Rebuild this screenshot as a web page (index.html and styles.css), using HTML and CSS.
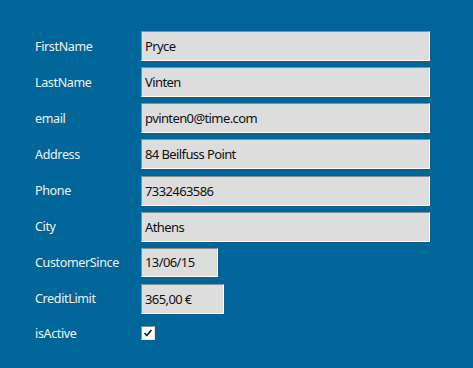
FILE: index.html
```html
<!DOCTYPE html>
<html>
<head>
<meta charset="utf-8">
<link rel="stylesheet" href="styles.css">
</head>
<body>
<div class="form">
  <div class="label">FirstName</div><div class="field wide">Pryce</div>
  <div class="label">LastName</div><div class="field wide">Vinten</div>
  <div class="label">email</div><div class="field wide">pvinten0@time.com</div>
  <div class="label">Address</div><div class="field wide">84 Beilfuss Point</div>
  <div class="label">Phone</div><div class="field wide">7332463586</div>
  <div class="label">City</div><div class="field wide">Athens</div>
  <div class="label">CustomerSince</div><div class="field date">13/06/15</div>
  <div class="label">CreditLimit</div><div class="field money">365,00 €</div>
  <div class="label">isActive</div>
  <div class="check"><svg width="10" height="10" viewBox="0 0 10 10"><path d="M1.5 5 L3.8 7.5 L8.5 2" fill="none" stroke="#222" stroke-width="1.8"/></svg></div>
</div>
</body>
</html>
```
FILE: styles.css
```css
html, body {
  margin: 0;
  padding: 0;
  background: #006699;
  width: 473px;
  height: 368px;
  overflow: hidden;
}
.form {
  display: grid;
  grid-template-columns: 106px auto;
  grid-template-rows: repeat(8, 30px) 26px;
  row-gap: 6.15px;
  align-items: center;
  justify-items: start;
  padding: 31px 0 0 35px;
  font-family: "Noto Sans", "Open Sans", sans-serif;
}
.label {
  color: #f2f2f2;
  font-size: 12.5px;
  letter-spacing: -0.35px;
}
.field {
  box-sizing: border-box;
  height: 30px;
  background: #dddddd;
  border-top: 1px solid #8c8c8c;
  border-left: 1px solid #8c8c8c;
  border-right: 1px solid #ffffff;
  border-bottom: 1px solid #ffffff;
  color: #111;
  font-size: 13px;
  letter-spacing: -0.6px;
  line-height: 28px;
  padding-left: 3px;
  white-space: nowrap;
}
.wide { width: 289px; }
.date { width: 77px; height: 29px; line-height: 27px; align-self: start; }
.money { width: 83px; }
.check {
  box-sizing: border-box;
  width: 14px;
  height: 14px;
  background: #fff;
  border-top: 1px solid #8c8c8c;
  border-left: 1px solid #8c8c8c;
  border-right: 1px solid #e0e0e0;
  border-bottom: 1px solid #e0e0e0;
  display: flex;
  align-items: center;
  justify-content: center;
}
```
